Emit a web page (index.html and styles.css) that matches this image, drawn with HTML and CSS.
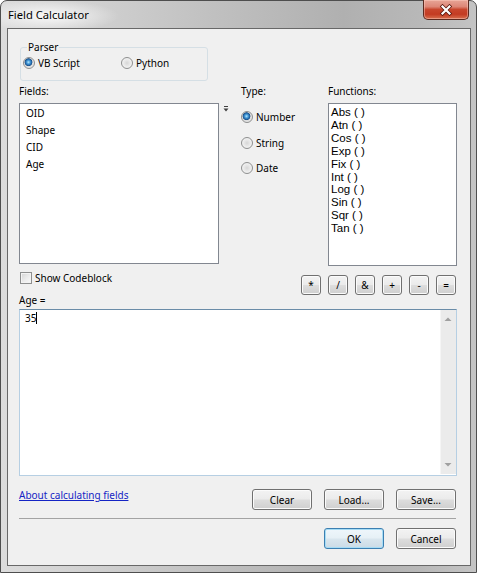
FILE: index.html
```html
<!DOCTYPE html>
<html lang="en">
<head>
<meta charset="utf-8">
<title>Field Calculator</title>
<link rel="stylesheet" href="styles.css">
</head>
<body>
<div class="window">
  <div class="titlebar">
    <span class="title">Field Calculator</span>
    <div class="close-btn">
      <svg width="16" height="12" viewBox="0 0 16 12"><path d="M4.5 2.5 L11.5 9.5 M11.5 2.5 L4.5 9.5" stroke="#5a1a10" stroke-width="3.8" stroke-linecap="square"/><path d="M4.5 2.5 L11.5 9.5 M11.5 2.5 L4.5 9.5" stroke="#ffffff" stroke-width="2.2" stroke-linecap="square"/></svg>
    </div>
  </div>
  <div class="client">
    <fieldset class="parser">
      <legend>Parser</legend>
      <div class="parser-row">
        <span class="radio vb"><span class="rb on"></span>VB Script</span>
        <span class="radio"><span class="rb"></span>Python</span>
      </div>
    </fieldset>
    <div class="main">
      <div class="lbl fields-lbl">Fields:</div>
      <div class="lbl type-lbl">Type:</div>
      <div class="lbl func-lbl">Functions:</div>
      <div class="listbox fields">
        <div class="item">OID</div>
        <div class="item">Shape</div>
        <div class="item">CID</div>
        <div class="item">Age</div>
      </div>
      <div class="sort">
        <svg width="6" height="7" viewBox="0 0 6 7"><path d="M1 0.5 H5" stroke="#404040" stroke-width="1"/><path d="M0.5 2.5 H5.5 L3 5.5 Z" fill="#404040"/></svg>
      </div>
      <div class="types">
        <span class="radio"><span class="rb on"></span>Number</span>
        <span class="radio"><span class="rb"></span>String</span>
        <span class="radio"><span class="rb"></span>Date</span>
      </div>
      <div class="listbox funcs">
        <div class="fn">Abs ( )</div>
        <div class="fn">Atn ( )</div>
        <div class="fn">Cos ( )</div>
        <div class="fn">Exp ( )</div>
        <div class="fn">Fix ( )</div>
        <div class="fn">Int ( )</div>
        <div class="fn">Log ( )</div>
        <div class="fn">Sin ( )</div>
        <div class="fn">Sqr ( )</div>
        <div class="fn">Tan ( )</div>
      </div>
      <div class="left-stack">
        <span class="check"><span class="cb"></span>Show Codeblock</span>
        <div class="lbl age">Age =</div>
      </div>
      <div class="ops">
        <button class="btn op">*</button>
        <button class="btn op">/</button>
        <button class="btn op">&amp;</button>
        <button class="btn op">+</button>
        <button class="btn op">-</button>
        <button class="btn op">=</button>
      </div>
    </div>
    <div class="expr">
      <div class="expr-text">35<span class="caret"></span></div>
      <div class="vscroll">
        <svg width="16" height="8" viewBox="0 0 16 8"><path d="M4.5 6 L8 2.5 L11.5 6 Z" fill="#a0a0a0"/></svg>
        <svg width="16" height="8" viewBox="0 0 16 8"><path d="M4.5 2 L8 5.5 L11.5 2 Z" fill="#a0a0a0"/></svg>
      </div>
    </div>
    <div class="actions">
      <a class="link" href="#">About calculating fields</a>
      <div class="btn-group">
        <button class="btn wide">Clear</button>
        <button class="btn wide">Load...</button>
        <button class="btn wide">Save...</button>
      </div>
    </div>
    <div class="sep"></div>
    <div class="okrow">
      <button class="btn wide default">OK</button>
      <button class="btn wide">Cancel</button>
    </div>
  </div>
</div>
</body>
</html>
```

FILE: styles.css
```css
html, body {
  margin: 0;
  padding: 0;
}
body {
  width: 477px;
  height: 573px;
  overflow: hidden;
  background: #ffffff;
  font-family: "Noto Sans", "Open Sans", sans-serif;
  font-size: 10px;
  color: #000;
}
.window {
  box-sizing: border-box;
  width: 477px;
  height: 573px;
  border: 1px solid #4e4e4e;
  border-radius: 7px 7px 0 0;
  padding: 0 5px 6px 6px;
  display: flex;
  flex-direction: column;
  background:
    radial-gradient(ellipse 70px 16px at 48px 15px, rgba(255,255,255,0.85), rgba(255,255,255,0) 100%),
    linear-gradient(to right, #dcdcdc 0%, #d0d0d0 20%, #c0c0c0 45%, #b0b0b0 72%, #b8b8b8 88%, #c4c4c4 100%);
}
.titlebar {
  height: 27px;
  display: flex;
  justify-content: space-between;
  align-items: flex-start;
  flex: none;
}
.title {
  font-size: 11.2px;
  line-height: 14px;
  margin-top: 7px;
  padding-left: 1px;
  color: #000;
}
.close-btn {
  box-sizing: border-box;
  width: 46px;
  height: 20px;
  margin-top: -1px;
  margin-right: 2px;
  border: 1px solid #5b2a20;
  border-top: none;
  border-radius: 0 0 5px 5px;
  background: linear-gradient(#e7a596 0%, #dd8777 35%, #c8462d 50%, #c33b22 75%, #d8704f 100%);
  box-shadow: inset 0 0 0 1px rgba(255,210,200,0.45);
  display: flex;
  align-items: center;
  justify-content: center;
}
.client {
  flex: 1;
  box-sizing: border-box;
  border: 1px solid #686868;
  background: #f0f0f0;
  padding: 11px 13px 0 11px;
  display: flex;
  flex-direction: column;
}
.parser {
  box-sizing: border-box;
  width: 188px;
  margin: 0 0 0 1px;
  padding: 2px 0 10px 2px;
  border: 1px solid #d5dfe5;
  border-radius: 3px;
}
.parser legend {
  margin-left: 4px;
  padding: 0 1px;
  line-height: 14px;
}
.parser-row {
  display: flex;
}
.radio {
  display: flex;
  align-items: center;
  height: 14px;
  line-height: 14px;
}
.radio.vb {
  width: 98px;
}
.rb {
  box-sizing: border-box;
  flex: none;
  width: 12px;
  height: 12px;
  margin-right: 3px;
  border-radius: 50%;
  border: 1px solid #8e8f8f;
  background: radial-gradient(circle at 50% 50%, #d6d6d6 0, #e9e9e9 45%, #fbfbfb 100%);
}
.rb.on {
  background: radial-gradient(circle at 45% 42%, #b7e6fb 0, #4aa0dd 1.6px, #1f5f9f 3.2px, #1a4f86 3.6px, #dcdcdc 4.2px, #f6f6f6 100%);
}
.main {
  margin-top: 3px;
  display: grid;
  grid-template-columns: 200px 22px 87px 129px;
  grid-template-rows: 14px 163px auto;
  row-gap: 5px;
}
.lbl {
  line-height: 14px;
}
.fields-lbl { grid-column: 1; grid-row: 1; }
.type-lbl { grid-column: 3; grid-row: 1; }
.func-lbl { grid-column: 4; grid-row: 1; }
.listbox {
  box-sizing: border-box;
  border: 1px solid #828790;
  background: #fff;
}
.fields {
  grid-column: 1;
  grid-row: 2;
  height: 161px;
  padding: 1px 0 0 6px;
}
.item {
  line-height: 17px;
}
.sort {
  grid-column: 2;
  grid-row: 2;
  padding: 3px 0 0 4px;
}
.sort svg {
  display: block;
}
.types {
  grid-column: 3;
  grid-row: 2;
  padding-top: 7px;
  display: flex;
  flex-direction: column;
  gap: 11.7px;
  align-items: flex-start;
}
.funcs {
  grid-column: 4;
  grid-row: 2;
  height: 163px;
  padding: 2px 0 0 2px;
}
.fn {
  font-family: "Liberation Sans", Arial, sans-serif;
  font-size: 11.5px;
  line-height: 12.9px;
  white-space: pre;
}
.left-stack {
  grid-column: 1;
  grid-row: 3;
  display: flex;
  flex-direction: column;
  align-items: flex-start;
}
.check {
  display: flex;
  align-items: center;
  height: 14px;
  line-height: 14px;
  margin-top: 0;
}
.cb {
  box-sizing: border-box;
  width: 12px;
  height: 12px;
  margin: 0 3px 0 1px;
  border: 1px solid #8e8f8f;
  background: linear-gradient(135deg, #d4d4d4 0%, #ececec 55%, #fafafa 100%);
  box-shadow: inset 0 0 0 1px #f3f3f3;
}
.age {
  margin-top: 8px;
}
.ops {
  grid-column: 3 / 5;
  grid-row: 3;
  justify-self: end;
  margin: 4px 1px 0 0;
  display: flex;
  gap: 7px;
}
.btn {
  box-sizing: border-box;
  height: 21px;
  padding: 0;
  border: 1px solid #707070;
  border-radius: 3px;
  background: linear-gradient(#f3f3f3 0%, #ebebeb 48%, #dddddd 52%, #cfcfcf 100%);
  box-shadow: inset 0 0 0 1px #fbfbfb;
  font-family: inherit;
  font-size: 10px;
  color: #000;
  display: flex;
  align-items: center;
  justify-content: center;
}
.op {
  width: 20px;
  height: 20px;
}
.wide {
  width: 60px;
}
.default {
  border-color: #3c7fb1;
  box-shadow: inset 0 0 0 1px #a6dcf5;
  background: linear-gradient(#eef6fb 0%, #e6f0f6 48%, #d9e6ee 52%, #cbdbe6 100%);
}
.expr {
  margin-top: 2px;
  box-sizing: border-box;
  height: 167px;
  border: 1px solid #b6cfe3;
  border-top-color: #6a8ca8;
  background: #fff;
  display: flex;
}
.expr-text {
  flex: 1;
  padding: 1px 0 0 5px;
  line-height: 14px;
}
.caret {
  display: inline-block;
  width: 1px;
  height: 12px;
  background: #000;
  vertical-align: -2px;
}
.vscroll {
  width: 16px;
  box-sizing: border-box;
  margin: 0 0 1px 0;
  background: #ebebeb;
  border-left: 1px solid #f5f5f5;
  display: flex;
  flex-direction: column;
  justify-content: space-between;
  padding: 5px 0 5px 0;
}
.vscroll svg {
  display: block;
  margin-left: -1px;
}
.actions {
  margin-top: 12px;
  display: flex;
  justify-content: space-between;
  align-items: flex-start;
  padding-right: 1px;
}
.link {
  line-height: 14px;
  color: #1424c4;
  text-decoration: underline;
}
.btn-group {
  margin-top: 1px;
  display: flex;
  gap: 12px;
}
.sep {
  margin: 8px 1px 0 0;
  height: 1px;
  background: #a3a3a3;
}
.okrow {
  margin-top: 9px;
  display: flex;
  justify-content: flex-end;
  gap: 12px;
  padding-right: 1px;
}
```
